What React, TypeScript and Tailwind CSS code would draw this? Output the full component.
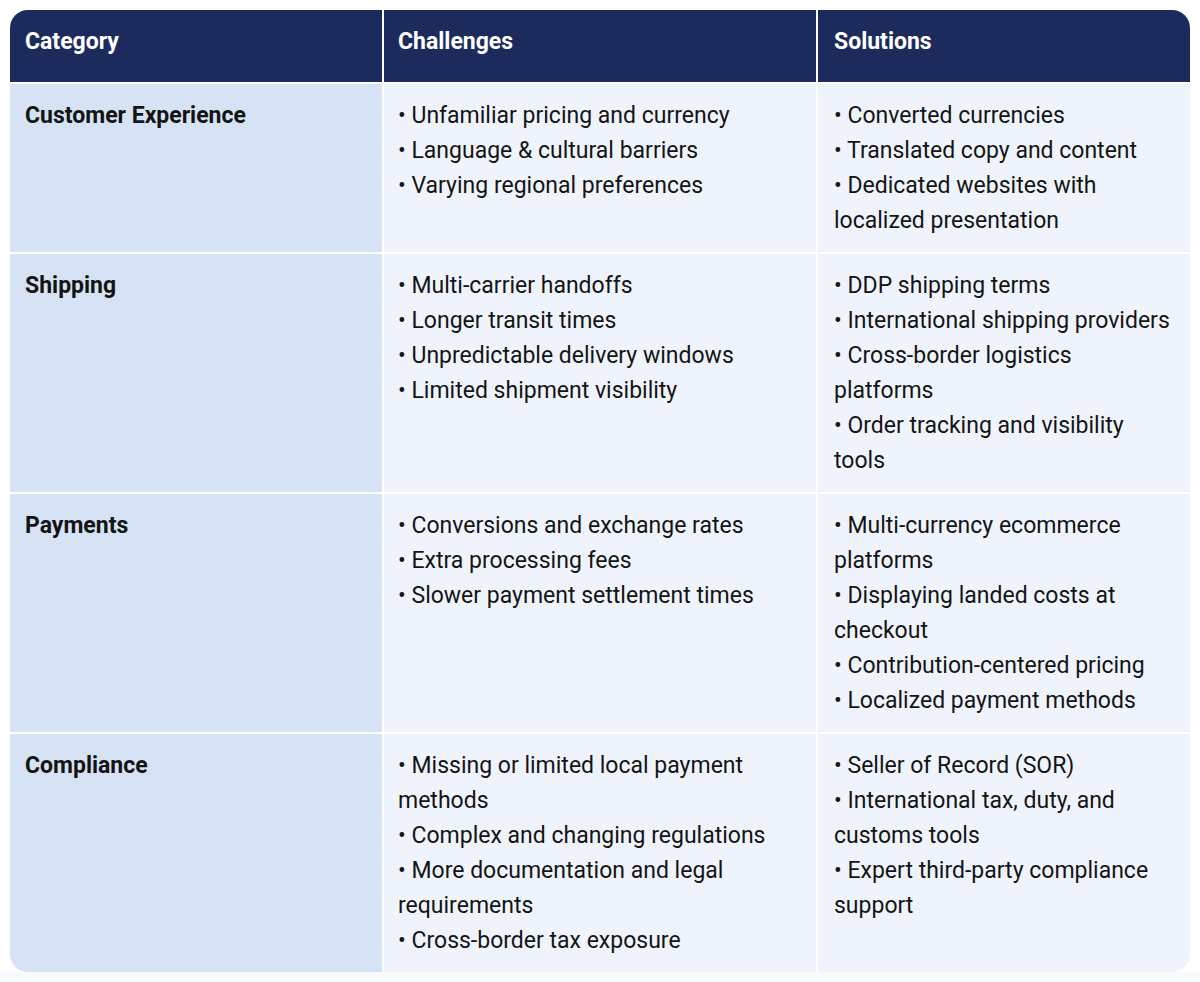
const ROWS = [
  {
    category: "Customer Experience",
    challenges: ["Unfamiliar pricing and currency", "Language & cultural barriers", "Varying regional preferences"],
    solutions: ["Converted currencies", "Translated copy and content", "Dedicated websites with localized presentation"],
  },
  {
    category: "Shipping",
    challenges: ["Multi-carrier handoffs", "Longer transit times", "Unpredictable delivery windows", "Limited shipment visibility"],
    solutions: [
      "DDP shipping terms",
      "International shipping providers",
      "Cross-border logistics platforms",
      "Order tracking and visibility tools",
    ],
  },
  {
    category: "Payments",
    challenges: ["Conversions and exchange rates", "Extra processing fees", "Slower payment settlement times"],
    solutions: [
      "Multi-currency ecommerce platforms",
      "Displaying landed costs at checkout",
      "Contribution-centered pricing",
      "Localized payment methods",
    ],
  },
  {
    category: "Compliance",
    challenges: [
      "Missing or limited local payment methods",
      "Complex and changing regulations",
      "More documentation and legal requirements",
      "Cross-border tax exposure",
    ],
    solutions: ["Seller of Record (SOR)", "International tax, duty, and customs tools", "Expert third-party compliance support"],
  },
];

function BulletList({ items }: { items: string[] }) {
  return (
    <div>
      {items.map((item) => (
        <div key={item}>• {item}</div>
      ))}
    </div>
  );
}

export default function App() {
  return (
    <div
      className="w-[1200px] h-[982px] flex flex-col bg-[#f9fafb] text-[23px] leading-[35px] text-[#141414]"
      style={{ fontFamily: "Roboto, 'Noto Sans', sans-serif" }}
    >
      <div className="bg-white px-[10px] pt-[10px]">
        <div className="grid grid-cols-[372px_432px_372px] gap-[2px] rounded-[18px] overflow-hidden bg-white">
          {/* Header */}
          <div className="bg-[#1d2b5c] h-[72px] pt-[14px] px-[15px] font-bold text-white">Category</div>
          <div className="bg-[#1d2b5c] h-[72px] pt-[14px] px-[14px] font-bold text-white">Challenges</div>
          <div className="bg-[#1d2b5c] h-[72px] pt-[14px] px-[16px] font-bold text-white">Solutions</div>

          {ROWS.map((row) => (
            <div key={row.category} className="contents">
              <div className="bg-[#d5e3f4] px-[15px] py-[14px] font-bold">{row.category}</div>
              <div className="bg-[#eff4fc] pl-[14px] pr-[16px] py-[14px]">
                <BulletList items={row.challenges} />
              </div>
              <div className="bg-[#eff4fc] pl-[16px] pr-[14px] py-[14px]">
                <BulletList items={row.solutions} />
              </div>
            </div>
          ))}
        </div>
      </div>
      <div className="flex-1" />
    </div>
  );
}
